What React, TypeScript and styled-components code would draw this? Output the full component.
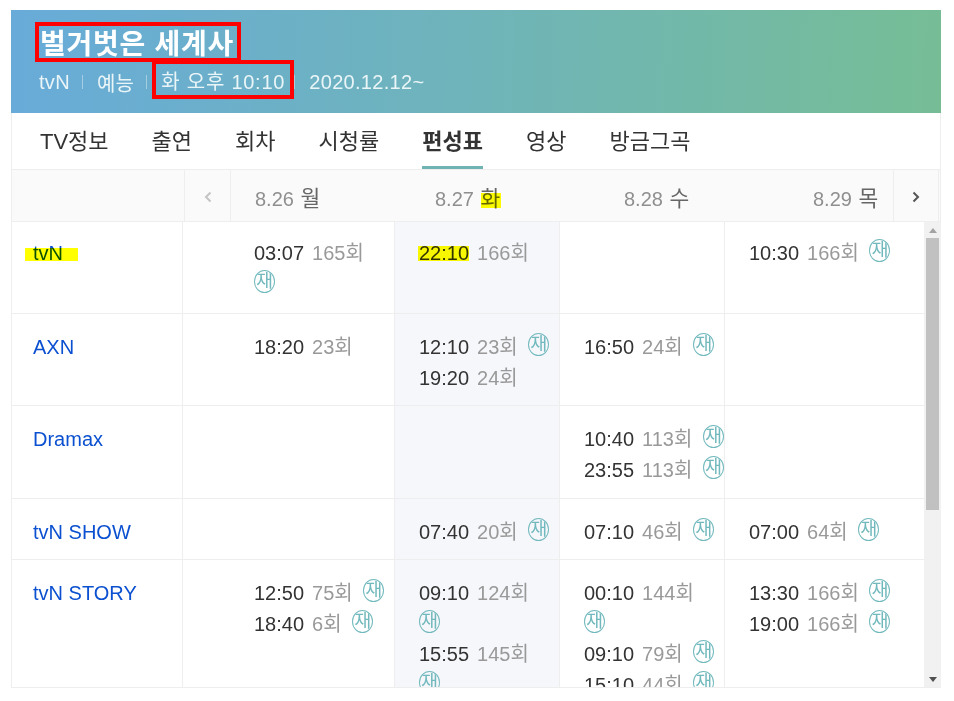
import React from 'react';
import styled, { createGlobalStyle } from 'styled-components';

const GlobalStyle = createGlobalStyle`
  html, body {
    margin: 0;
    padding: 0;
    background: #fff;
    font-family: "Liberation Sans", "Noto Sans CJK KR", sans-serif;
  }
`;

const Card = styled.div`
  box-sizing: border-box;
  width: 930px;
  margin: 10px 0 0 11px;
`;

const Hero = styled.div`
  box-sizing: border-box;
  height: 103px;
  padding: 16px 0 0 29px;
  background: linear-gradient(92deg, #68abd9 0%, #6fb4b9 50%, #76bd96 100%);
  color: #fff;
`;

const Title = styled.h1`
  display: inline-block;
  vertical-align: top;
  height: 32px;
  margin: 0 0 0 -1px;
  padding: 0 3px 0 1px;
  font-size: 28px;
  line-height: 37px;
  font-weight: 700;
  letter-spacing: 0.75px;
  outline: 4px solid #f00;
`;

const Meta = styled.div`
  display: flex;
  align-items: center;
  height: 36px;
  margin: 6px 0 0 -1px;
  font-size: 20px;
  color: #eaf5f7;
`;

const MetaItem = styled.span<{ $boxed?: boolean }>`
  letter-spacing: ${({ $boxed }) => ($boxed ? '0.75px' : '0.3px')};
  ${({ $boxed }) => $boxed && `
    box-sizing: border-box;
    width: 134px;
    height: 31px;
    margin: 0 -8px 5px -5px;
    padding-left: 5px;
    line-height: 37px;
    white-space: nowrap;
    outline: 4px solid #f00;
  `}
`;

const MetaSep = styled.i`
  width: 1px;
  height: 14px;
  margin: 0 14px 0 12px;
  background: rgba(255, 255, 255, 0.4);
`;

const Tabs = styled.nav`
  box-sizing: border-box;
  display: flex;
  gap: 43px;
  height: 57px;
  padding-left: 28px;
  border: 1px solid #eee;
  border-top: 0;
  background: #fff;
`;

const Tab = styled.a<{ $active?: boolean }>`
  box-sizing: border-box;
  height: 56px;
  padding-top: 14px;
  font-size: 22px;
  line-height: 30px;
  color: #333;
  font-weight: ${({ $active }) => ($active ? 700 : 400)};
  border-bottom: 3px solid ${({ $active }) => ($active ? '#6fb3b2' : 'transparent')};
`;

const DateBar = styled.div`
  box-sizing: border-box;
  display: flex;
  height: 52px;
  padding-right: 1px;
  border-left: 1px solid #eee;
  border-right: 1px solid #eee;
  border-bottom: 1px solid #eee;
  background: #fafafa;
`;

const DateSpacer = styled.div`
  width: 172px;
`;

const Arrow = styled.button<{ $dark?: boolean }>`
  box-sizing: border-box;
  display: flex;
  align-items: center;
  justify-content: center;
  width: ${({ $dark }) => ($dark ? '46px' : '47px')};
  padding: 3px 0 0;
  background: none;
  border: 0;
  border-left: 1px solid #eee;
  border-right: 1px solid #eee;
  color: ${({ $dark }) => ($dark ? '#555' : '#c4c4c4')};
`;

const Dates = styled.div`
  flex: 1;
  display: flex;
  padding-left: 24px;
`;

const DateCell = styled.div<{ $width: number }>`
  width: ${({ $width }) => $width}px;
  padding-top: 14px;
  font-size: 20px;
  line-height: 30px;
  color: #8f8f8f;
  white-space: nowrap;
`;

const Day = styled.span`
  color: #666;
  font-size: 21.5px;
  margin-left: 1px;
`;

const Marked = styled.span`
  position: relative;
  &::after {
    content: '';
    position: absolute;
    mix-blend-mode: multiply;
    background: #ff0;
  }
`;

const MarkedDay = styled(Marked)`
  &::after {
    left: 2px;
    right: -1px;
    top: 5px;
    bottom: 2px;
  }
`;

const MarkedName = styled(Marked)`
  &::after {
    left: -8px;
    right: -15px;
    top: 6px;
    bottom: 3px;
  }
`;

const MarkedTime = styled(Marked)`
  &::after {
    left: -1px;
    right: 0;
    top: 4px;
    bottom: 3px;
  }
`;

const Body = styled.div`
  box-sizing: border-box;
  display: flex;
  height: 466px;
  border-left: 1px solid #eee;
  border-bottom: 1px solid #eee;
`;

const Rows = styled.div`
  flex: 1;
  min-width: 0;
  overflow: hidden;
`;

const Row = styled.div`
  --pad-top: 18px;
  --pad-bottom: 12px;
  display: grid;
  grid-template-columns: 171px 212px 165px 165px 1fr;
  border-bottom: 1px solid #eee;
  &:first-child {
    --pad-top: 16px;
    --pad-bottom: 14px;
  }
`;

const NameCell = styled.div`
  padding: var(--pad-top) 0 var(--pad-bottom) 21px;
  border-right: 1px solid #eee;
  font-size: 20px;
  line-height: 30.6px;
  color: #0b50d0;
`;

const Slot = styled.div<{ $today?: boolean; $inset: number; $last?: boolean }>`
  min-width: 0;
  padding: var(--pad-top) 0 var(--pad-bottom) ${({ $inset }) => $inset}px;
  border-right: ${({ $last }) => ($last ? 0 : '1px solid #eee')};
  background: ${({ $today }) => ($today ? '#f6f7fb' : '#fff')};
`;

const Entry = styled.div`
  font-size: 20px;
  line-height: 30.6px;
  color: #333;
`;

const Episode = styled.span`
  color: #999;
  margin: 0 5px 0 8px;
`;

const Rerun = styled.span`
  box-sizing: border-box;
  display: inline-block;
  width: 21px;
  height: 23px;
  border: 1px solid #72b9bd;
  border-radius: 50%;
  color: #72b9bd;
  font-size: 18.5px;
  line-height: 20px;
  text-align: center;
  vertical-align: -2px;
  white-space: nowrap;
  overflow: hidden;
`;

const ScrollTrack = styled.div`
  display: flex;
  flex-direction: column;
  align-items: center;
  width: 17px;
  flex: none;
  background: #f1f1f1;
`;

const ScrollButton = styled.div<{ $dark?: boolean }>`
  display: flex;
  align-items: center;
  justify-content: center;
  width: 100%;
  height: 16px;
  color: ${({ $dark }) => ($dark ? '#505050' : '#a3a3a3')};
`;

const ScrollThumb = styled.div`
  width: 13px;
  height: 272px;
  margin-left: -1px;
  background: #c1c1c1;
`;

const ScrollRest = styled.div`
  flex: 1;
`;

const Chevron = ({ flip }: { flip?: boolean }) => (
  <svg width="8" height="12" viewBox="0 0 8 12" fill="none" stroke="currentColor" strokeWidth="2">
    <path d={flip ? 'M1.5 1.5 6 6l-4.5 4.5' : 'M6.5 1.5 2 6l4.5 4.5'} />
  </svg>
);

const Triangle = ({ down }: { down?: boolean }) => (
  <svg width="8" height="5" viewBox="0 0 8 5" fill="currentColor">
    <path d={down ? 'M0 0h8L4 5z' : 'M0 5h8L4 0z'} />
  </svg>
);

type Show = { time: React.ReactNode; ep: string; rerun?: boolean };

const rows: { name: React.ReactNode; days: Show[][] }[] = [
  {
    name: <MarkedName>tvN</MarkedName>,
    days: [
      [{ time: '03:07', ep: '165회', rerun: true }],
      [{ time: <MarkedTime>22:10</MarkedTime>, ep: '166회' }],
      [],
      [{ time: '10:30', ep: '166회', rerun: true }],
    ],
  },
  {
    name: 'AXN',
    days: [
      [{ time: '18:20', ep: '23회' }],
      [{ time: '12:10', ep: '23회', rerun: true }, { time: '19:20', ep: '24회' }],
      [{ time: '16:50', ep: '24회', rerun: true }],
      [],
    ],
  },
  {
    name: 'Dramax',
    days: [
      [],
      [],
      [{ time: '10:40', ep: '113회', rerun: true }, { time: '23:55', ep: '113회', rerun: true }],
      [],
    ],
  },
  {
    name: 'tvN SHOW',
    days: [
      [],
      [{ time: '07:40', ep: '20회', rerun: true }],
      [{ time: '07:10', ep: '46회', rerun: true }],
      [{ time: '07:00', ep: '64회', rerun: true }],
    ],
  },
  {
    name: 'tvN STORY',
    days: [
      [{ time: '12:50', ep: '75회', rerun: true }, { time: '18:40', ep: '6회', rerun: true }],
      [{ time: '09:10', ep: '124회', rerun: true }, { time: '15:55', ep: '145회', rerun: true }],
      [
        { time: '00:10', ep: '144회', rerun: true },
        { time: '09:10', ep: '79회', rerun: true },
        { time: '15:10', ep: '44회', rerun: true },
      ],
      [{ time: '13:30', ep: '166회', rerun: true }, { time: '19:00', ep: '166회', rerun: true }],
    ],
  },
];

const insets = [71, 24, 24, 24];

export default function App() {
  return (
    <>
      <GlobalStyle />
      <Card>
        <Hero>
          <Title>벌거벗은 세계사</Title>
          <Meta>
            <MetaItem>tvN</MetaItem>
            <MetaSep />
            <MetaItem>예능</MetaItem>
            <MetaSep />
            <MetaItem $boxed>화 오후 10:10</MetaItem>
            <MetaSep />
            <MetaItem>2020.12.12~</MetaItem>
          </Meta>
        </Hero>
        <Tabs>
          <Tab>TV정보</Tab>
          <Tab>출연</Tab>
          <Tab>회차</Tab>
          <Tab>시청률</Tab>
          <Tab $active>편성표</Tab>
          <Tab>영상</Tab>
          <Tab>방금그곡</Tab>
        </Tabs>
        <DateBar>
          <DateSpacer />
          <Arrow><Chevron /></Arrow>
          <Dates>
            <DateCell $width={180}>8.26 <Day>월</Day></DateCell>
            <DateCell $width={189}>8.27 <MarkedDay><Day>화</Day></MarkedDay></DateCell>
            <DateCell $width={189}>8.28 <Day>수</Day></DateCell>
            <DateCell $width={80}>8.29 <Day>목</Day></DateCell>
          </Dates>
          <Arrow $dark><Chevron flip /></Arrow>
        </DateBar>
        <Body>
          <Rows>
            {rows.map((row, r) => (
              <Row key={r}>
                <NameCell>{row.name}</NameCell>
                {row.days.map((shows, d) => (
                  <Slot key={d} $inset={insets[d]} $today={d === 1} $last={d === 3}>
                    {shows.map((show, s) => (
                      <Entry key={s}>
                        {show.time}
                        <Episode>{show.ep}</Episode>{' '}
                        {show.rerun && <Rerun>재</Rerun>}
                      </Entry>
                    ))}
                  </Slot>
                ))}
              </Row>
            ))}
          </Rows>
          <ScrollTrack>
            <ScrollButton><Triangle /></ScrollButton>
            <ScrollThumb />
            <ScrollRest />
            <ScrollButton $dark><Triangle down /></ScrollButton>
          </ScrollTrack>
        </Body>
      </Card>
    </>
  );
}
